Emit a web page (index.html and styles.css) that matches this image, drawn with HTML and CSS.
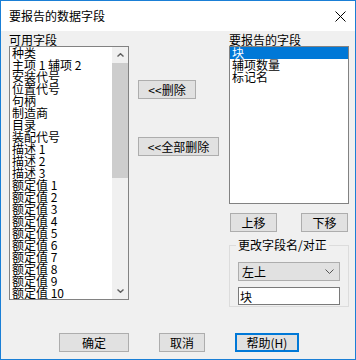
FILE: index.html
```html
<!DOCTYPE html>
<html lang="zh-CN">
<head>
<meta charset="UTF-8">
<title>要报告的数据字段</title>
<link rel="stylesheet" href="styles.css">
</head>
<body>

<div class="window">
  <div class="titlebar">
    <span class="title">要报告的数据字段</span>
    <svg class="close" width="11" height="11" viewBox="0 0 11 11">
      <path d="M0.5 0.5 L10.5 10.5 M10.5 0.5 L0.5 10.5" stroke="#000" stroke-width="1" fill="none"/>
    </svg>
  </div>

  <div class="body">
    <div class="main">
      <div class="col-left">
        <div class="caption">可用字段</div>
        <div class="listbox listbox-tall">
          <ul class="items">
            <li>种类</li>
            <li>主项 1 辅项 2</li>
            <li>安装代号</li>
            <li>位置代号</li>
            <li>句柄</li>
            <li>制造商</li>
            <li>目录</li>
            <li>装配代号</li>
            <li>描述 1</li>
            <li>描述 2</li>
            <li>描述 3</li>
            <li>额定值 1</li>
            <li>额定值 2</li>
            <li>额定值 3</li>
            <li>额定值 4</li>
            <li>额定值 5</li>
            <li>额定值 6</li>
            <li>额定值 7</li>
            <li>额定值 8</li>
            <li>额定值 9</li>
            <li>额定值 10</li>
            <li>额定值 11</li>
            <li>额定值 12</li>
          </ul>
          <div class="scrollbar">
            <div class="sb-btn">
              <svg width="7" height="4" viewBox="0 0 7 4"><path d="M0.5 3.5 L3.5 0.7 L6.5 3.5" stroke="#606060" stroke-width="1.4" fill="none"/></svg>
            </div>
            <div class="sb-thumb"></div>
            <div class="sb-track"></div>
            <div class="sb-btn">
              <svg width="7" height="4" viewBox="0 0 7 4"><path d="M0.5 0.5 L3.5 3.3 L6.5 0.5" stroke="#606060" stroke-width="1.4" fill="none"/></svg>
            </div>
          </div>
        </div>
      </div>

      <div class="col-mid">
        <button class="btn btn-remove">&lt;&lt;删除</button>
        <button class="btn btn-remove-all">&lt;&lt;全部删除</button>
      </div>

      <div class="col-right">
        <div class="caption">要报告的字段</div>
        <ul class="listbox listbox-short items">
          <li class="selected">块</li>
          <li>辅项数量</li>
          <li>标记名</li>
        </ul>
        <div class="move-row">
          <button class="btn btn-up">上移</button>
          <button class="btn btn-down">下移</button>
        </div>
        <fieldset class="group">
          <legend>更改字段名/对正</legend>
          <div class="select">
            <span>左上</span>
            <svg width="9" height="5" viewBox="0 0 9 5"><path d="M0.5 0.5 L4.5 4.5 L8.5 0.5" stroke="#555" stroke-width="1" fill="none"/></svg>
          </div>
          <input class="field" type="text" value="块">
        </fieldset>
      </div>
    </div>

    <div class="footer">
      <button class="btn btn-ok">确定</button>
      <button class="btn btn-cancel">取消</button>
      <button class="btn btn-help">帮助(H)</button>
    </div>
  </div>
</div>

</body>
</html>
```

FILE: styles.css
```css
body {
  margin: 0;
  padding: 0;
  background: #f0f0f0;
  font-family: "Noto Sans CJK SC", "Noto Sans", sans-serif;
  font-size: 12px;
  color: #000;
}
.window {
  width: 356px;
  height: 360px;
  box-sizing: border-box;
  border: 1px solid #1a7fd6;
  display: flex;
  flex-direction: column;
}
.titlebar {
  height: 30px;
  flex: none;
  background: #fff;
  display: flex;
  align-items: center;
  justify-content: space-between;
  padding: 0 9px 0 8px;
}
.title {
  line-height: 14px;
}
.body {
  flex: 1;
  background: #f0f0f0;
  padding: 2px 6px 0 8px;
}
.main {
  display: flex;
}
.caption {
  height: 13px;
  line-height: 13px;
}
.col-left {
  width: 120px;
}
.col-mid {
  width: 91px;
  margin-left: 9px;
  padding-top: 47px;
  display: flex;
  flex-direction: column;
  align-items: flex-start;
}
.col-right {
  width: 120px;
}
.listbox {
  box-sizing: border-box;
  border: 1px solid #828282;
  background: #fff;
  margin: 0;
  overflow: hidden;
}
.listbox-tall {
  height: 254px;
  display: flex;
}
.listbox-short {
  height: 158px;
}
.items {
  list-style: none;
  margin: 0;
  padding: 0;
}
.listbox-tall .items {
  flex: 1;
  overflow: hidden;
}
.items li {
  height: 12px;
  line-height: 12px;
  padding-left: 2px;
  white-space: nowrap;
}
.items li.selected {
  background: #0078d7;
  color: #fff;
}
.scrollbar {
  width: 16px;
  background: #f0f0f0;
  display: flex;
  flex-direction: column;
}
.sb-btn {
  height: 16px;
  display: flex;
  align-items: center;
  justify-content: center;
}
.sb-thumb {
  height: 115px;
  background: #cdcdcd;
}
.sb-track {
  flex: 1;
}
.btn {
  box-sizing: border-box;
  height: 19px;
  padding: 0;
  border: 1px solid #adadad;
  background: #e1e1e1;
  font-family: inherit;
  font-size: 12px;
  line-height: 15px;
  color: #000;
}
.btn-remove {
  width: 58px;
}
.btn-remove-all {
  width: 81px;
  margin-top: 38px;
}
.move-row {
  display: flex;
  justify-content: space-between;
  margin-top: 9px;
}
.btn-up,
.btn-down {
  width: 47px;
}
.btn-up {
  margin-left: 1px;
}
.btn-down {
  margin-right: 1px;
}
.group {
  margin: 7px 0 0 0;
  padding: 0 8px 1px 8px;
  border: 1px solid #dcdcdc;
  min-width: 0;
}
.group legend {
  padding: 0 2px;
  margin-left: -2px;
  line-height: 12px;
  height: 12px;
}
.select {
  box-sizing: border-box;
  height: 19px;
  margin-top: 11px;
  border: 1px solid #adadad;
  background: #e1e1e1;
  display: flex;
  align-items: center;
  justify-content: space-between;
  padding: 0 5px 0 3px;
  line-height: 15px;
}
.field {
  display: block;
  box-sizing: border-box;
  width: 100%;
  height: 18px;
  margin-top: 6px;
  padding: 0 1px;
  border: 1px solid #7a7a7a;
  background: #fff;
  font-family: inherit;
  font-size: 12px;
  line-height: 14px;
  color: #000;
  outline: none;
}
.footer {
  display: flex;
  gap: 30px;
  margin-top: 26px;
  padding-left: 50px;
}
.btn-ok {
  width: 70px;
}
.btn-cancel {
  width: 46px;
}
.btn-help {
  width: 64px;
  border: 2px solid #0078d7;
}
```
